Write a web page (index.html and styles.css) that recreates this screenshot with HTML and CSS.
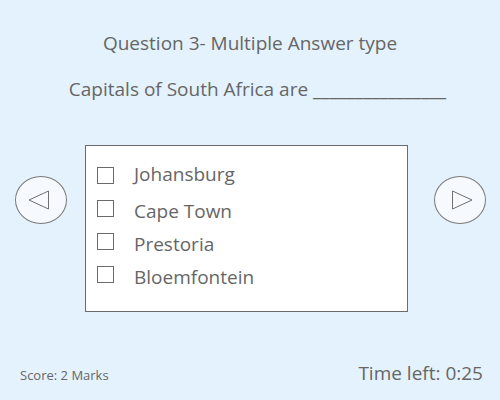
FILE: index.html
```html
<!DOCTYPE html>
<html>
<head>
<meta charset="utf-8">
<link rel="stylesheet" href="styles.css">
</head>
<body>
<div class="page">
  <h1 class="title">Question 3- Multiple Answer type</h1>
  <p class="question">Capitals of South Africa are ________________</p>
  <div class="middle">
    <button class="nav" aria-label="Previous">
      <svg width="22" height="20" viewBox="0 0 22 20"><polygon points="20.5,1 20.5,19 1,10" fill="none" stroke="#707070" stroke-width="1"/></svg>
    </button>
    <div class="answers">
      <label class="opt o1"><span class="box"></span><span class="lbl">Johansburg</span></label>
      <label class="opt"><span class="box"></span><span class="lbl">Cape Town</span></label>
      <label class="opt"><span class="box"></span><span class="lbl">Prestoria</span></label>
      <label class="opt"><span class="box"></span><span class="lbl">Bloemfontein</span></label>
    </div>
    <button class="nav" aria-label="Next">
      <svg width="22" height="20" viewBox="0 0 22 20"><polygon points="1.5,1 1.5,19 21,10" fill="none" stroke="#707070" stroke-width="1"/></svg>
    </button>
  </div>
  <div class="footer">
    <span class="score">Score: 2 Marks</span>
    <span class="time">Time left: 0:25</span>
  </div>
</div>
</body>
</html>
```
FILE: styles.css
```css
html, body {
  margin: 0;
  padding: 0;
}
body {
  background: #e4f2fd;
  font-family: "Open Sans", "Noto Sans", sans-serif;
  color: #666;
  width: 500px;
  height: 400px;
  overflow: hidden;
}
.page {
  display: flex;
  flex-direction: column;
  height: 400px;
}
.title {
  margin: 30px 0 0;
  font-size: 19px;
  font-weight: normal;
  text-align: center;
  line-height: 26px;
}
.question {
  margin: 20px 0 0;
  padding-left: 15px;
  font-size: 19px;
  text-align: center;
  line-height: 26px;
}
.middle {
  display: flex;
  align-items: flex-start;
  margin-top: 43px;
  padding-left: 15px;
}
.nav {
  width: 52px;
  height: 48px;
  margin-top: 31px;
  border-radius: 50%;
  border: 1px solid #7a7a7a;
  background: #f6fafe;
  padding: 0;
  display: flex;
  align-items: center;
  justify-content: center;
  flex: none;
}
.nav:first-child svg { margin-left: -4px; }
.nav:last-child svg { margin-left: 4px; }
.answers {
  width: 323px;
  height: 167px;
  margin: 0 26px 0 18px;
  background: #fff;
  border: 1px solid #6b6b6b;
  box-sizing: border-box;
  padding: 21px 0 0 11px;
  display: flex;
  flex-direction: column;
  flex: none;
}
.opt {
  display: flex;
  align-items: flex-start;
  gap: 20px;
  font-size: 19px;
  height: 33px;
}
.box {
  width: 17px;
  height: 17px;
  border: 1px solid #6b6b6b;
  box-sizing: border-box;
  flex: none;
}
.lbl {
  line-height: 22px;
  margin-top: 0;
}
.o1 .lbl { margin-top: -4px; }
.footer {
  display: flex;
  justify-content: space-between;
  align-items: baseline;
  margin-top: auto;
  padding: 0 17px 14px 20px;
}
.score {
  font-size: 13px;
}
.time {
  font-size: 19px;
}
```
